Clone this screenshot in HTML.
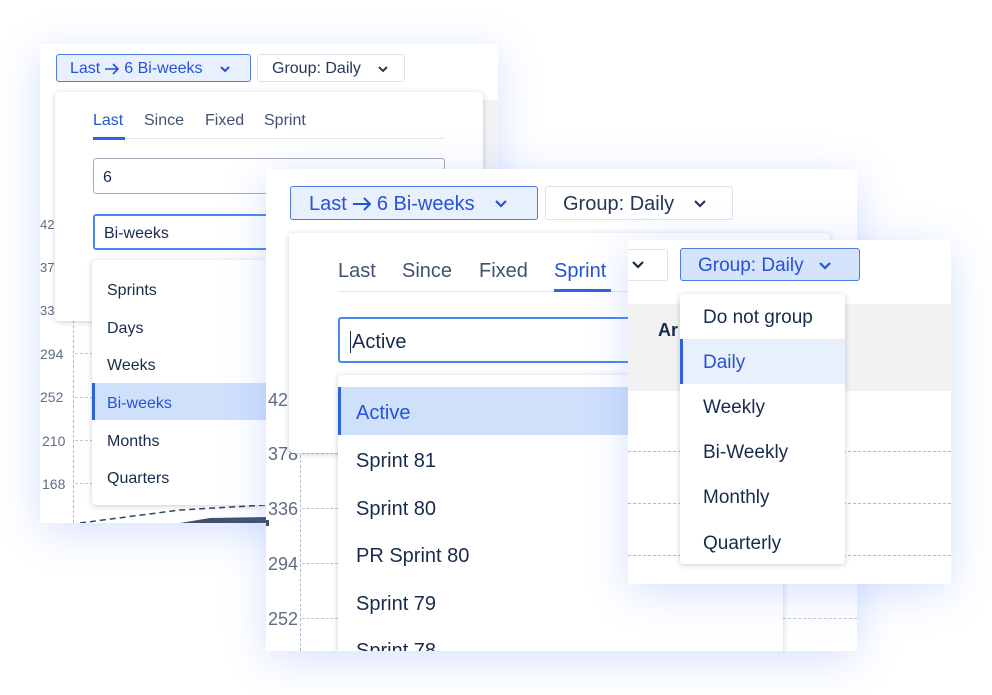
<!DOCTYPE html>
<html><head><meta charset="utf-8"><style>
*{box-sizing:border-box;margin:0;padding:0}
body{width:992px;height:695px;background:#fff;position:relative;overflow:hidden;font-family:"Liberation Sans",sans-serif;color:#172b4d}
.a{position:absolute}
.panel{position:absolute;background:#fff;box-shadow:0 8px 40px rgba(70,120,255,.22)}
.btn{position:absolute;border-radius:3px;display:flex;align-items:center;white-space:nowrap}
.bb{background:#e9f0fd;border:1px solid #4c7ce6;color:#2453d4}
.bw{background:#fff;border:1px solid #dfe1e6;color:#253858}
.pop{position:absolute;background:#fff;border-radius:4px;box-shadow:0 1px 6px rgba(9,30,66,.22)}
.t{position:absolute;white-space:nowrap}
.lbl{position:absolute;color:#5e6c84;white-space:nowrap}
.hl{position:absolute;background:#cfe0fb;border-left:3px solid #2d62e0}
svg{position:absolute}
.ch{position:static;display:inline-block}
</style></head><body>

<!-- Panel 1 -->
<div class="panel" style="left:40px;top:44px;width:458px;height:479px">
  <div class="a" style="left:443px;top:56px;width:15px;height:220px;background:#f2f3f5"></div>
</div>
<div class="lbl" style="left:40px;top:217px;font-size:13px">42</div>
<div class="lbl" style="left:40px;top:260px;font-size:13px">37</div>
<div class="lbl" style="left:40px;top:303px;font-size:13px">33</div>
<div class="lbl" style="left:40px;top:346px;font-size:14px">294</div>
<div class="lbl" style="left:40px;top:389px;font-size:14px">252</div>
<div class="lbl" style="left:42px;top:433px;font-size:14px">210</div>
<div class="lbl" style="left:42px;top:476px;font-size:14px">168</div>
<div class="a" style="left:73px;top:320px;height:203px;border-left:1px dashed #b3bac5"></div>
<div class="a" style="left:75px;top:353px;width:18px;border-top:1px dashed #c1c7d0"></div>
<div class="a" style="left:75px;top:397px;width:18px;border-top:1px dashed #c1c7d0"></div>
<div class="a" style="left:75px;top:440px;width:18px;border-top:1px dashed #c1c7d0"></div>
<div class="a" style="left:75px;top:483px;width:18px;border-top:1px dashed #c1c7d0"></div>
<svg style="left:80px;top:500px" width="186" height="23"><path d="M0 23 L100 10 L186 5" stroke="#344563" stroke-width="1.5" stroke-dasharray="6 4" fill="none"/><path d="M100 23 L130 18 L186 17 L186 23Z" fill="#42526e"/></svg>

<div class="btn bb" style="left:56px;top:54px;width:195px;height:28px;padding-left:13px;font-size:16px;padding-top:2px">Last <svg class="ch" width="16" height="12" style="margin:0 4px"><path d="M1 6H14M9 1L14 6L9 11" stroke="#2453d4" stroke-width="1.6" fill="none"/></svg> 6 Bi-weeks<svg class="ch" width="10" height="7" style="margin-left:17px"><path d="M1 1L5 5L9 1" stroke="#2453d4" stroke-width="2" fill="none"/></svg></div>
<div class="btn bw" style="left:257px;top:54px;width:148px;height:28px;padding-left:14px;font-size:16px;padding-top:2px">Group: Daily<svg class="ch" width="10" height="7" style="margin-left:17px"><path d="M1 1L5 5L9 1" stroke="#253858" stroke-width="2" fill="none"/></svg></div>

<div class="pop" style="left:55px;top:92px;width:428px;height:229px">
  <div class="t" style="left:38px;top:20px;font-size:16px;color:#2453d4">Last</div>
  <div class="t" style="left:89px;top:20px;font-size:16px;color:#42526e">Since</div>
  <div class="t" style="left:150px;top:20px;font-size:16px;color:#42526e">Fixed</div>
  <div class="t" style="left:209px;top:20px;font-size:16px;color:#42526e">Sprint</div>
  <div class="a" style="left:38px;top:46px;width:352px;height:1px;background:#e4e6ea"></div>
  <div class="a" style="left:38px;top:45px;width:32px;height:3px;background:#2d62e0"></div>
  <div class="a" style="left:38px;top:66px;width:352px;height:36px;border:1px solid #a5adba;border-radius:3px;font-size:16px;padding:10px 0 0 9px">6</div>
  <div class="a" style="left:38px;top:122px;width:352px;height:36px;border:2px solid #4c86f0;border-radius:3px;font-size:16px;padding:9px 0 0 9px">Bi-weeks</div>
</div>
<div class="pop" style="left:92px;top:260px;width:300px;height:245px">
  <div class="t" style="left:15px;top:22px;font-size:16px">Sprints</div>
  <div class="t" style="left:15px;top:60px;font-size:16px">Days</div>
  <div class="t" style="left:15px;top:97px;font-size:16px">Weeks</div>
  <div class="hl" style="left:0;top:123px;width:300px;height:37px"></div>
  <div class="t" style="left:15px;top:135px;font-size:16px;color:#2453d4">Bi-weeks</div>
  <div class="t" style="left:15px;top:173px;font-size:16px">Months</div>
  <div class="t" style="left:15px;top:210px;font-size:16px">Quarters</div>
</div>

<!-- Panel 2 -->
<div class="panel" style="left:266px;top:169px;width:591px;height:482px;overflow:hidden">
  <div class="lbl" style="left:2px;top:221px;font-size:18px">42</div>
  <div class="lbl" style="left:2px;top:275px;font-size:18px">378</div>
  <div class="lbl" style="left:2px;top:330px;font-size:18px">336</div>
  <div class="lbl" style="left:2px;top:385px;font-size:18px">294</div>
  <div class="lbl" style="left:2px;top:440px;font-size:18px">252</div>
  <div class="a" style="left:34px;top:286px;height:196px;border-left:1px dashed #b3bac5"></div>
  <div class="a" style="left:36px;top:284px;width:36px;border-top:1px dashed #c1c7d0"></div>
  <div class="a" style="left:36px;top:339px;width:36px;border-top:1px dashed #c1c7d0"></div>
  <div class="a" style="left:36px;top:394px;width:36px;border-top:1px dashed #c1c7d0"></div>
  <div class="a" style="left:36px;top:449px;width:36px;border-top:1px dashed #c1c7d0"></div>
  <div class="a" style="left:517px;top:449px;width:74px;border-top:1px dashed #c1c7d0"></div>
  <div class="a" style="left:0;top:351px;width:3px;height:6px;background:#42526e"></div>

  <div class="btn bb" style="left:24px;top:17px;width:248px;height:34px;padding-left:18px;font-size:20px;padding-top:2px">Last <svg class="ch" width="20" height="14" style="margin:0 5px"><path d="M1 7H18M12 1L18 7L12 13" stroke="#2453d4" stroke-width="2" fill="none"/></svg> 6 Bi-weeks<svg class="ch" width="12" height="8" style="margin-left:20px"><path d="M1 1L6 6L11 1" stroke="#2453d4" stroke-width="2.2" fill="none"/></svg></div>
  <div class="btn bw" style="left:279px;top:17px;width:188px;height:34px;padding-left:17px;font-size:20px;padding-top:2px">Group: Daily<svg class="ch" width="12" height="8" style="margin-left:20px"><path d="M1 1L6 6L11 1" stroke="#253858" stroke-width="2.2" fill="none"/></svg></div>

  <div class="pop" style="left:23px;top:64px;width:541px;height:220px">
    <div class="t" style="left:49px;top:27px;font-size:20px;color:#42526e">Last</div>
    <div class="t" style="left:113px;top:27px;font-size:20px;color:#42526e">Since</div>
    <div class="t" style="left:190px;top:27px;font-size:20px;color:#42526e">Fixed</div>
    <div class="t" style="left:265px;top:27px;font-size:20px;color:#2453d4">Sprint</div>
    <div class="a" style="left:49px;top:58px;width:450px;height:1px;background:#e4e6ea"></div>
    <div class="a" style="left:265px;top:56px;width:57px;height:3px;background:#2d62e0"></div>
    <div class="a" style="left:49px;top:84px;width:460px;height:46px;border:2px solid #4c86f0;border-radius:3px;font-size:20px;padding:12px 0 0 10px"><span style="border-left:1px solid #172b4d;padding-left:1px">Active</span></div>
  </div>
  <div class="pop" style="left:72px;top:206px;width:445px;height:300px">
    <div class="hl" style="left:0;top:12px;width:445px;height:48px"></div>
    <div class="t" style="left:18px;top:27px;font-size:20px;color:#2453d4">Active</div>
    <div class="t" style="left:18px;top:75px;font-size:20px">Sprint 81</div>
    <div class="t" style="left:18px;top:123px;font-size:20px">Sprint 80</div>
    <div class="t" style="left:18px;top:170px;font-size:20px">PR Sprint 80</div>
    <div class="t" style="left:18px;top:218px;font-size:20px">Sprint 79</div>
    <div class="t" style="left:18px;top:265px;font-size:20px">Sprint 78</div>
  </div>
</div>

<!-- Panel 3 -->
<div class="panel" style="left:628px;top:240px;width:323px;height:344px;overflow:hidden">
  <div class="btn bw" style="left:-10px;top:9px;width:50px;height:32px;padding-left:13px"><svg class="ch" width="12" height="8"><path d="M1 1L6 6L11 1" stroke="#172b4d" stroke-width="2.2" fill="none"/></svg></div>
  <div class="a" style="left:0;top:64px;width:323px;height:87px;background:#f2f2f2"></div>
  <div class="t" style="left:30px;top:80px;font-size:18px;font-weight:bold">Ar</div>
  <div class="a" style="left:0;top:211px;width:323px;border-top:1px dashed #b3bac5"></div>
  <div class="a" style="left:0;top:263px;width:323px;border-top:1px dashed #b3bac5"></div>
  <div class="a" style="left:0;top:315px;width:323px;border-top:1px dashed #b3bac5"></div>
</div>
<div class="btn" style="left:680px;top:248px;width:180px;height:33px;padding-left:17px;font-size:19px;padding-top:2px;background:#d5e3fb;border:1px solid #4c7ce6;color:#2453d4">Group: Daily<svg class="ch" width="12" height="8" style="margin-left:15px"><path d="M1 1L6 6L11 1" stroke="#2453d4" stroke-width="2.2" fill="none"/></svg></div>
<div class="pop" style="left:680px;top:294px;width:165px;height:270px">
  <div class="t" style="left:23px;top:13px;font-size:19px">Do not group</div>
  <div class="a" style="left:0;top:45px;width:165px;height:45px;background:#e9f0fd;border-left:3px solid #2d62e0"></div>
  <div class="t" style="left:23px;top:58px;font-size:19px;color:#2453d4">Daily</div>
  <div class="t" style="left:23px;top:103px;font-size:19px">Weekly</div>
  <div class="t" style="left:23px;top:148px;font-size:19px">Bi-Weekly</div>
  <div class="t" style="left:23px;top:193px;font-size:19px">Monthly</div>
  <div class="t" style="left:23px;top:239px;font-size:19px">Quarterly</div>
</div>
</body></html>
